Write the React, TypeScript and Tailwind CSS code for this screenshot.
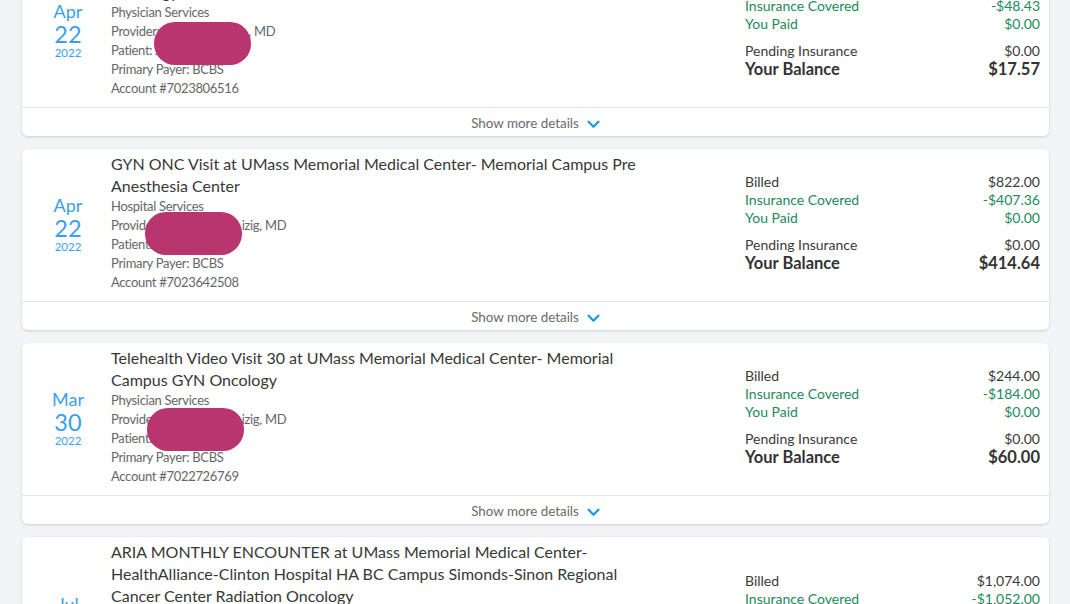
import React from "react";

type Card = {
  mon: string;
  day: string;
  year: string;
  title: string[];
  service: string;
  provider: [string, string, number, string];
  patient: [string, string];
  account: string;
  billed: string;
  covered: string;
  paid: string;
  pending: string;
  balance: string;
  blob?: { left: number; top: number; w: number; h: number };
};

const cards: Card[] = [
  {
    mon: "Apr",
    day: "22",
    year: "2022",
    title: [
      "Office Visit at UMass Memorial Medical Center- Memorial Campus GYN",
      "Oncology",
    ],
    service: "Physician Services",
    provider: ["Provide", "r: Rachel Evans", 96, ", MD"],
    patient: ["Patient:", " Jane Doe"],
    account: "7023806516",
    billed: "$66.00",
    covered: "-$48.43",
    paid: "$0.00",
    pending: "$0.00",
    balance: "$17.57",
    blob: { left: 43, top: 63, w: 97, h: 43 },
  },
  {
    mon: "Apr",
    day: "22",
    year: "2022",
    title: [
      "GYN ONC Visit at UMass Memorial Medical Center- Memorial Campus Pre",
      "Anesthesia Center",
    ],
    service: "Hospital Services",
    provider: ["Provid", "er: Rachel Ka", 96, "izig, MD"],
    patient: ["Patien", "t: Jane Doe"],
    account: "7023642508",
    billed: "$822.00",
    covered: "-$407.36",
    paid: "$0.00",
    pending: "$0.00",
    balance: "$414.64",
    blob: { left: 34, top: 59, w: 97, h: 43 },
  },
  {
    mon: "Mar",
    day: "30",
    year: "2022",
    title: [
      "Telehealth Video Visit 30 at UMass Memorial Medical Center- Memorial",
      "Campus GYN Oncology",
    ],
    service: "Physician Services",
    provider: ["Provid", "er: Rachel Ka", 96, "izig, MD"],
    patient: ["Patien", "t: Jane Doe"],
    account: "7022726769",
    billed: "$244.00",
    covered: "-$184.00",
    paid: "$0.00",
    pending: "$0.00",
    balance: "$60.00",
    blob: { left: 36, top: 61, w: 97, h: 43 },
  },
  {
    mon: "Jul",
    day: "28",
    year: "2021",
    title: [
      "ARIA MONTHLY ENCOUNTER at UMass Memorial Medical Center-",
      "HealthAlliance-Clinton Hospital HA BC Campus Simonds-Sinon Regional",
      "Cancer Center Radiation Oncology",
    ],
    service: "Hospital Services",
    provider: ["Provid", "er: Rachel Ka", 96, "izig, MD"],
    patient: ["Patien", "t: Jane Doe"],
    account: "7021998843",
    billed: "$1,074.00",
    covered: "-$1,052.00",
    paid: "$0.00",
    pending: "$0.00",
    balance: "$22.00",
  },
];

function Chevron() {
  return (
    <svg width="13" height="9" viewBox="0 0 13 9" className="ml-[8px] mt-[1px]">
      <path
        d="M1.6 1.8 L6.5 6.7 L11.4 1.8"
        fill="none"
        stroke="#1b9ae0"
        strokeWidth="2.3"
        strokeLinecap="round"
        strokeLinejoin="round"
      />
    </svg>
  );
}

function CardView({ c, first }: { c: Card; first?: boolean }) {
  return (
    <div
      className={
        "bg-white rounded-[6px] shadow-[0_1px_3px_rgba(0,0,0,0.16)] " +
        (first ? "-mt-[45px]" : "")
      }
    >
      <div className="flex pt-[4px] pb-[9px]">
        <div className="w-[89px] pl-[3px] flex flex-col items-center justify-center text-[#3d9ef0]">
          <div className="text-[18px] leading-[21px] mt-[2px]">{c.mon}</div>
          <div className="text-[23.5px] leading-[24px]">{c.day}</div>
          <div className="text-[11.5px] leading-[13px]">{c.year}</div>
        </div>
        <div className="w-[560px] relative">
          <div className="text-[16px] leading-[22px] text-[#383838]">
            {c.title.map((t, i) => (
              <div key={i} className="whitespace-nowrap">
                {t}
              </div>
            ))}
          </div>
          <div className="text-[13px] tracking-[-0.3px] leading-[19px] text-[#666666]">
            <div>{c.service}</div>
            <div className="whitespace-nowrap">
              {c.provider[0]}
              <span
                className="inline-block overflow-hidden whitespace-nowrap align-bottom"
                style={{ width: c.provider[2] }}
              >
                {c.provider[1]}
              </span>
              {c.provider[3]}
            </div>
            <div>
              {c.patient[0]}
              {c.patient[1]}
            </div>
            <div>Primary Payer: BCBS</div>
            <div>Account #{c.account}</div>
          </div>
          {c.blob && (
            <div
              className="absolute bg-[#b8356f] rounded-[21px] blur-[0.6px]"
              style={{
                left: c.blob.left,
                top: c.blob.top,
                width: c.blob.w,
                height: c.blob.h,
              }}
            />
          )}
        </div>
        <div className="flex-1" />
        <div className="w-[295px] mr-[9px] self-center text-[14px] leading-[18px]">
          <div className="flex justify-between text-[#3a3a3a]">
            <span>Billed</span>
            <span>{c.billed}</span>
          </div>
          <div className="flex justify-between text-[#1c8a5c]">
            <span>Insurance Covered</span>
            <span>{c.covered}</span>
          </div>
          <div className="flex justify-between text-[#1c8a5c]">
            <span>You Paid</span>
            <span>{c.paid}</span>
          </div>
          <div className="flex justify-between text-[#3a3a3a] mt-[9px]">
            <span>Pending Insurance</span>
            <span>{c.pending}</span>
          </div>
          <div className="flex justify-between text-[#333333] font-bold text-[16.5px]">
            <span>Your Balance</span>
            <span>{c.balance}</span>
          </div>
        </div>
      </div>
      <div className="border-t border-[#e3e5e8] h-[29px] pt-[3px] flex items-center justify-center text-[13.4px] text-[#6a6a6a]">
        <span>Show more details</span>
        <Chevron />
      </div>
    </div>
  );
}

export default function App() {
  return (
    <div
      className="w-[1070px] h-[604px] overflow-hidden bg-[#f2f4f7]"
      style={{ fontFamily: "Lato, 'Liberation Sans', sans-serif" }}
    >
      <div className="pl-[22px] pr-[21px] flex flex-col gap-[13px]">
        {cards.map((c, i) => (
          <CardView key={i} c={c} first={i === 0} />
        ))}
      </div>
    </div>
  );
}
